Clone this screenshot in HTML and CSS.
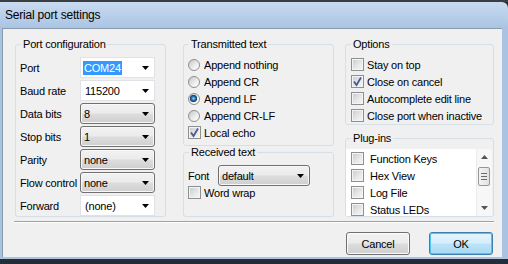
FILE: index.html
```html
<!DOCTYPE html>
<html lang="en">
<head>
  <meta charset="UTF-8" />
  <title>Serial port settings</title>
  <link rel="stylesheet" href="styles.css">
</head>
<body>
  <div class="window">
    <div class="titlebar">Serial port settings</div>

    <div class="frame">
      <div class="client">
        <div class="groups">

          <fieldset class="group port">
            <legend>Port configuration</legend>
            <div class="rows">
              <div class="row"><label>Port</label>
                <div class="combo edit"><span class="sel">COM24</span><svg class="arrow" width="7" height="4"><polygon points="0,0 7,0 3.5,4" /></svg></div>
              </div>
              <div class="row"><label>Baud rate</label>
                <div class="combo edit"><span class="val">115200</span><svg class="arrow" width="7" height="4"><polygon points="0,0 7,0 3.5,4" /></svg></div>
              </div>
              <div class="row"><label>Data bits</label>
                <div class="combo list"><span>8</span><svg class="arrow" width="7" height="4"><polygon points="0,0 7,0 3.5,4" /></svg></div>
              </div>
              <div class="row"><label>Stop bits</label>
                <div class="combo list"><span>1</span><svg class="arrow" width="7" height="4"><polygon points="0,0 7,0 3.5,4" /></svg></div>
              </div>
              <div class="row"><label>Parity</label>
                <div class="combo list"><span>none</span><svg class="arrow" width="7" height="4"><polygon points="0,0 7,0 3.5,4" /></svg></div>
              </div>
              <div class="row"><label>Flow control</label>
                <div class="combo list"><span>none</span><svg class="arrow" width="7" height="4"><polygon points="0,0 7,0 3.5,4" /></svg></div>
              </div>
              <div class="row"><label>Forward</label>
                <div class="combo edit"><span class="val">(none)</span><svg class="arrow" width="7" height="4"><polygon points="0,0 7,0 3.5,4" /></svg></div>
              </div>
            </div>
          </fieldset>

          <div class="col mid">
            <fieldset class="group tx">
              <legend>Transmitted text</legend>
              <div class="opts">
                <div class="opt"><span class="radio"></span>Append nothing</div>
                <div class="opt"><span class="radio"></span>Append CR</div>
                <div class="opt"><span class="radio on"></span>Append LF</div>
                <div class="opt"><span class="radio"></span>Append CR-LF</div>
                <div class="opt check"><span class="box"><svg width="11" height="11"><polyline points="2,5.5 4.5,9 9,1.5" /></svg></span>Local echo</div>
              </div>
            </fieldset>
            <fieldset class="group rx">
              <legend>Received text</legend>
              <div class="rx-body">
                <div class="font-row"><label>Font</label>
                  <div class="combo list font"><span>default</span><svg class="arrow" width="7" height="4"><polygon points="0,0 7,0 3.5,4" /></svg></div>
                </div>
                <div class="opt check short"><span class="box"></span>Word wrap</div>
              </div>
            </fieldset>
          </div>

          <div class="col right">
            <fieldset class="group options">
              <legend>Options</legend>
              <div class="opts">
                <div class="opt check"><span class="box"></span>Stay on top</div>
                <div class="opt check"><span class="box"><svg width="11" height="11"><polyline points="2,5.5 4.5,9 9,1.5" /></svg></span>Close on cancel</div>
                <div class="opt check"><span class="box"></span>Autocomplete edit line</div>
                <div class="opt check"><span class="box"></span>Close port when inactive</div>
              </div>
            </fieldset>
            <fieldset class="group plugins">
              <legend>Plug-ins</legend>
              <div class="listbox">
                <div class="items">
                  <div class="item"><span class="box"></span>Function Keys</div>
                  <div class="item"><span class="box"></span>Hex View</div>
                  <div class="item"><span class="box"></span>Log File</div>
                  <div class="item"><span class="box"></span>Status LEDs</div>
                </div>
                <div class="scrollbar">
                  <div class="sb-btn"><svg width="7" height="4"><polygon points="0,4 7,4 3.5,0" /></svg></div>
                  <div class="thumb"><i></i><i></i><i></i></div>
                  <div class="sb-track"></div>
                  <div class="sb-btn"><svg width="7" height="4"><polygon points="0,0 7,0 3.5,4" /></svg></div>
                </div>
              </div>
            </fieldset>
          </div>

        </div>

        <div class="separator"></div>

        <div class="buttons">
          <button class="btn">Cancel</button>
          <button class="btn default">OK</button>
        </div>
      </div>
    </div>

    <div class="bottom"></div>
  </div>
</body>
</html>
```

FILE: styles.css
```css
* {
  box-sizing: border-box;
}

body {
  margin: 0;
  font-family: "Liberation Sans", Arial, sans-serif;
  font-size: 11px;
  letter-spacing: -0.2px;
  color: #000;
  background: #232d38;
}

.window {
  width: 508px;
  height: 264px;
  display: flex;
  flex-direction: column;
  overflow: hidden;
  background: #232d38;
  border-top: 2px solid #3a3d42;
}

.titlebar {
  height: 26px;
  display: flex;
  align-items: center;
  padding-left: 5px;
  font-size: 12px;
  background: linear-gradient(#c8dbef, #b9d0ea 50%, #a9c4e3);
  border-top-right-radius: 6px;
}

.frame {
  flex: 1;
  display: flex;
  padding: 0 6px 2px 2px;
  background: #a9c4e2;
}

.client {
  flex: 1;
  display: flex;
  flex-direction: column;
  padding: 9px 8px 0 12px;
  background: #f0f0f0;
  border-top: 1px solid #8b9aab;
  border-left: 1px solid #8b9aab;
}

.bottom {
  height: 5px;
}

/* group boxes */
.groups {
  display: flex;
  height: 179px;
}

.group {
  margin: 0;
  padding: 0;
  min-width: 0;
  border: 1px solid #d5dfe5;
  border-radius: 3px;
}

.group legend {
  margin-left: 5px;
  padding: 0 2px;
  line-height: 13px;
}

.port {
  width: 151px;
}

.col {
  display: flex;
  flex-direction: column;
}

.col.mid {
  width: 151px;
  margin-left: 17px;
}

.col.right {
  width: 149px;
  margin-left: 11px;
}

/* port configuration */
.rows {
  display: flex;
  flex-direction: column;
  gap: 2px;
  padding: 6px 0 0 4px;
}

.row {
  display: flex;
  align-items: center;
  height: 21px;
}

.row label {
  width: 60px;
  white-space: nowrap;
}

.combo {
  width: 75px;
  height: 21px;
  display: flex;
  align-items: center;
  padding: 0 5px 0 3px;
}

.combo .arrow {
  margin-left: auto;
  fill: #000;
}

.combo.edit {
  background: #fff;
  border: 1px solid #dfe3e8;
  padding-left: 2px;
}

.combo.edit .val {
  padding-left: 2px;
}

.combo.list {
  border: 1px solid #707070;
  border-radius: 3px;
  background: linear-gradient(#f2f2f2, #ebebeb 48%, #dddddd 52%, #cfcfcf);
  box-shadow: inset 0 0 0 1px #f8f8f8;
}

.sel {
  background: #3399ff;
  color: #fff;
  padding: 1px 1px;
  line-height: 12px;
}

/* radio and check options */
.opts {
  padding: 5px 0 0 4px;
}

.options .opts {
  padding-left: 5px;
}

.tx .opts {
  padding-bottom: 4px;
}

.opt {
  display: flex;
  align-items: center;
  gap: 4px;
  height: 17px;
  white-space: nowrap;
}

.opt.check {
  gap: 3px;
}

.opt.short {
  height: 13px;
}

.radio {
  width: 12px;
  height: 12px;
  border-radius: 50%;
  border: 1px solid #8e8f8f;
  background: linear-gradient(135deg, #c4c6c9, #f2f2f2 65%, #ffffff);
}

.radio.on {
  background:
    radial-gradient(circle at 45% 45%, #a8dcfb 0, #2f7fbf 1.6px, #123f6e 3.4px, rgba(18,63,110,0) 3.9px),
    linear-gradient(135deg, #c4c6c9, #f2f2f2 65%, #ffffff);
}

.box {
  width: 13px;
  height: 13px;
  flex: none;
  display: flex;
  align-items: center;
  justify-content: center;
  border: 1px solid #8e8f8f;
  background: linear-gradient(135deg, #c6cace, #e8e9ea 60%, #f6f6f6);
  box-shadow: inset 0 0 0 1px #f4f4f4;
}

.box polyline {
  fill: none;
  stroke: #4a5d92;
  stroke-width: 1.8;
}

/* received text */
.rx {
  flex: 1;
}

.rx-body {
  padding: 6px 0 0 4px;
}

.font-row {
  display: flex;
  align-items: center;
  height: 21px;
}

.font-row label {
  width: 30px;
}

.combo.font {
  width: 92px;
}

/* plug-ins */
.plugins {
  margin-top: 7px;
  flex: 1;
}

.listbox {
  height: 67px;
  margin: 4px 1px 0 0;
  display: flex;
  background: #fff;
}

.items {
  flex: 1;
  padding-top: 1px;
}

.item {
  display: flex;
  align-items: center;
  gap: 6px;
  height: 17px;
  padding-left: 5px;
  white-space: nowrap;
}

.scrollbar {
  width: 16px;
  display: flex;
  flex-direction: column;
  background: #f7f7f7;
  border-left: 1px solid #ececec;
}

.sb-btn {
  height: 16px;
  display: flex;
  align-items: center;
  justify-content: center;
  fill: #555;
}

.sb-track {
  flex: 1;
}

.thumb {
  height: 19px;
  margin: 2px 2px 0 1px;
  display: flex;
  flex-direction: column;
  align-items: center;
  justify-content: center;
  gap: 2px;
  border: 1px solid #979797;
  border-radius: 2px;
  background: linear-gradient(90deg, #f4f4f4, #e2e2e2);
}

.thumb i {
  display: block;
  width: 6px;
  height: 1px;
  background: #6b6b6b;
}

/* bottom of dialog */
.separator {
  margin: 4px 0 0 -1px;
  height: 2px;
  border-top: 1px solid #a0a0a0;
  border-bottom: 1px solid #ffffff;
}

.buttons {
  display: flex;
  justify-content: flex-end;
  gap: 19px;
  margin: 9px 1px 0 0;
}

.btn {
  width: 64px;
  height: 23px;
  padding: 0;
  font-family: inherit;
  font-size: 11px;
  letter-spacing: -0.2px;
  color: #000;
  border: 1px solid #707070;
  border-radius: 3px;
  background: linear-gradient(#f2f2f2, #ebebeb 48%, #dddddd 52%, #cfcfcf);
  box-shadow: inset 0 0 0 1px #fbfbfb;
}

.btn.default {
  border-color: #3c7fb1;
  background: linear-gradient(#e5f4fc, #d6eefb 48%, #bce3f8 52%, #a7d8f4);
  box-shadow: inset 0 0 0 1px #48c6f5;
}
```
